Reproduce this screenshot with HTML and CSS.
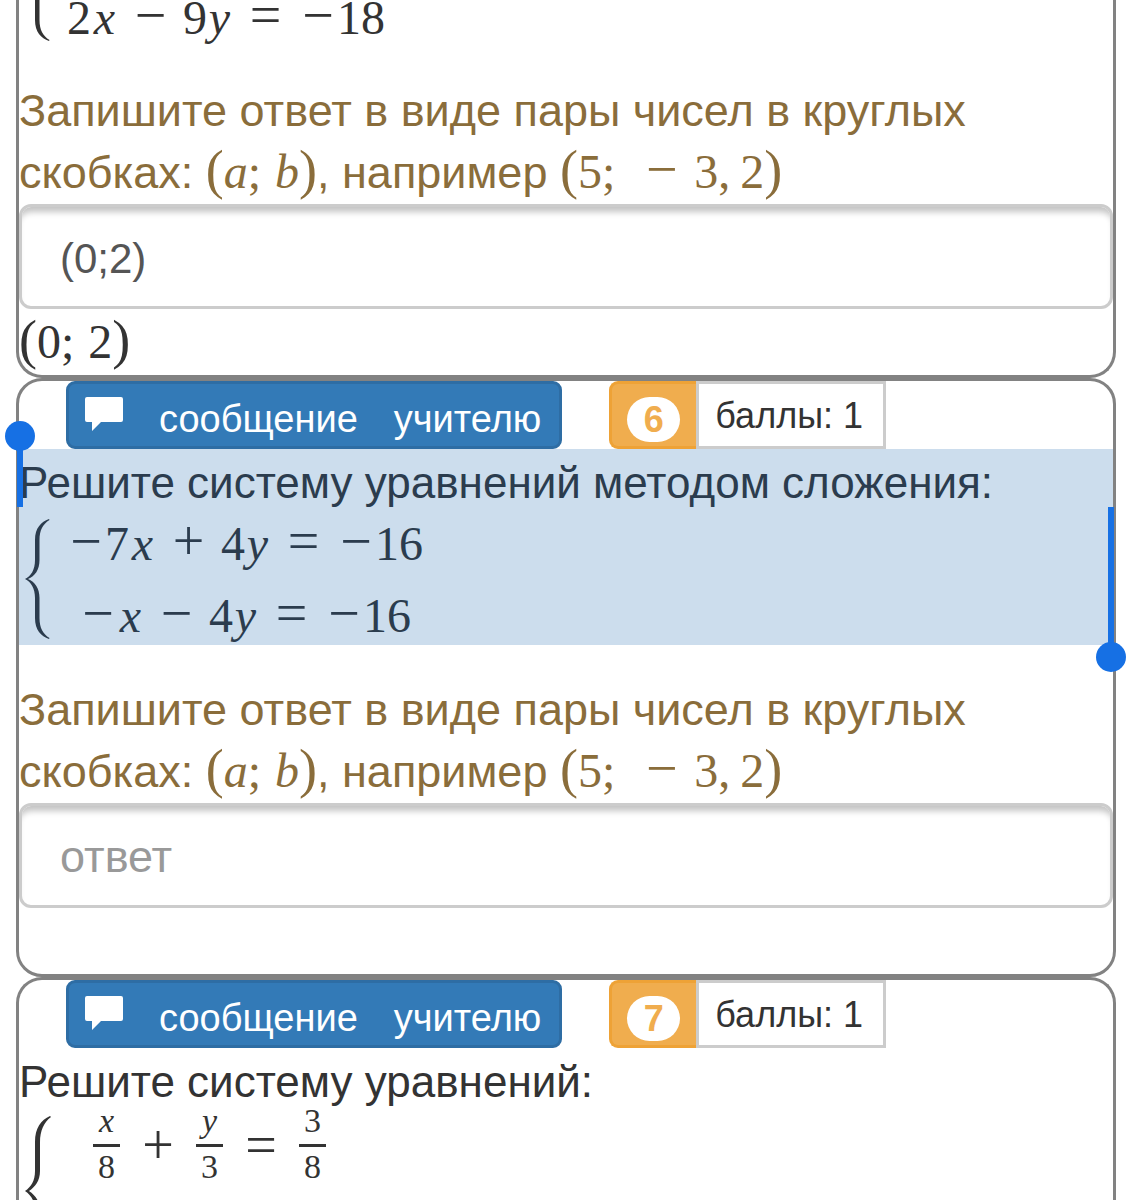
FILE: index.html
```html
<!DOCTYPE html>
<html lang="ru">
<head>
<meta charset="utf-8">
<meta name="viewport" content="width=device-width, initial-scale=1">
<title>Системы уравнений</title>
<link rel="stylesheet" href="styles.css">
</head>
<body>
<main class="page">
  <section class="card card-first">
    <div class="system system-end">
      <svg class="brace-end" viewBox="0 80 27 42" aria-hidden="true"><path d="M11 80V100C11 112 17 118 25 121L25.500 120C19 116 15.500 110 15.500 100V80Z"/></svg>
      <div class="rows">
        <div class="row math"><span>2</span><i class="x">x</i><span class="op">−</span><span>9</span><i class="y">y</i><span class="rel">=</span><span class="neg">−</span><span>18</span></div>
      </div>
    </div>
    <label class="hint" for="answer5">Запишите ответ в виде пары чисел в круглых скобках: <span class="math"><span class="paren">(</span><i>a</i><span class="semi">;</span><i>b</i><span class="paren">)</span></span>, например <span class="math"><span class="paren">(</span>5<span class="semi">;</span><span class="op">−</span>3<span class="comma">,</span>2<span class="paren">)</span></span></label>
    <input class="answer" id="answer5" type="text" value="(0;2)" placeholder="ответ">
    <div class="preview math"><span class="paren">(</span><span>0</span><span class="semi">;</span><span>2</span><span class="paren">)</span></div>
  </section>

  <section class="card">
    <div class="toolbar">
      <button class="message" type="button"><svg class="bubble" viewBox="0 0 38 34" aria-hidden="true"><path d="M2 0H36Q38 0 38 2V23Q38 25 36 25H16L7 34V25H2Q0 25 0 23V2Q0 0 2 0Z"/></svg><span>сообщение</span><span>учителю</span></button>
      <div class="score"><span class="number"><b class="badge">6</b></span><span class="points">баллы: 1</span></div>
    </div>
    <div class="selection">
      <p class="task">Решите систему уравнений методом сложения:</p>
      <div class="system">
        <svg class="brace" viewBox="0 0 27 122" aria-hidden="true"><path d="M25 1C17 4 11 10 11 22V42C11 52 7 58 1 61C7 64 11 70 11 80V100C11 112 17 118 25 121L25.500 120C19 116 15.500 110 15.500 100V80C15.500 70 11 64 4 61C11 58 15.500 52 15.500 42V22C15.500 12 19 6 25.500 2Z"/></svg>
        <div class="rows">
          <div class="row math"><span class="neg">−</span><span>7</span><i class="x">x</i><span class="op">+</span><span>4</span><i class="y">y</i><span class="rel">=</span><span class="neg">−</span><span>16</span></div>
          <div class="row math"><span class="neg">−</span><i class="x">x</i><span class="op">−</span><span>4</span><i class="y">y</i><span class="rel">=</span><span class="neg">−</span><span>16</span></div>
        </div>
      </div>
      <span class="handle handle-start"></span>
      <span class="handle handle-end"></span>
    </div>
    <label class="hint" for="answer6">Запишите ответ в виде пары чисел в круглых скобках: <span class="math"><span class="paren">(</span><i>a</i><span class="semi">;</span><i>b</i><span class="paren">)</span></span>, например <span class="math"><span class="paren">(</span>5<span class="semi">;</span><span class="op">−</span>3<span class="comma">,</span>2<span class="paren">)</span></span></label>
    <input class="answer" id="answer6" type="text" placeholder="ответ">
    <div class="preview math"></div>
  </section>

  <section class="card card-last">
    <div class="toolbar">
      <button class="message" type="button"><svg class="bubble" viewBox="0 0 38 34" aria-hidden="true"><path d="M2 0H36Q38 0 38 2V23Q38 25 36 25H16L7 34V25H2Q0 25 0 23V2Q0 0 2 0Z"/></svg><span>сообщение</span><span>учителю</span></button>
      <div class="score"><span class="number"><b class="badge">7</b></span><span class="points">баллы: 1</span></div>
    </div>
    <p class="task">Решите систему уравнений:</p>
    <div class="system">
      <svg class="brace-tall" viewBox="0 0 27 152" aria-hidden="true"><path d="M26 1C17 5 11 13 11 27V56C11 66 7 72 1 76C7 80 11 86 11 96V125C11 139 17 147 26 151L27 150C20 145 16 136 16 125V96C16 86 11 80 5 76C11 72 16 66 16 56V27C16 16 20 7 27 2Z"/></svg>
      <div class="fractions math"><span class="fraction"><i>x</i><span>8</span></span><span class="op">+</span><span class="fraction"><i>y</i><span>3</span></span><span class="rel">=</span><span class="fraction"><span>3</span><span>8</span></span></div>
    </div>
  </section>
</main>
</body>
</html>
```
FILE: styles.css
```css
* { box-sizing: border-box; }

body {
  margin: 0;
  background: #fff;
  color: #333;
  font-family: "Liberation Sans", Arial, sans-serif;
  font-size: 44px;
  line-height: 62px;
}

.page {
  display: flex;
  flex-direction: column;
  height: 100vh;
  overflow: hidden;
  padding: 0 18px 0 16px;
}

.card {
  flex: none;
  border: 3px solid #828282;
  border-radius: 26px;
}

.card-first {
  border-top: 0;
  border-top-left-radius: 0;
  border-top-right-radius: 0;
}

.card-last {
  flex: 1 0 0;
  min-height: 0;
  border-bottom: 0;
  border-bottom-left-radius: 0;
  border-bottom-right-radius: 0;
}

.toolbar {
  display: flex;
  gap: 47px;
  height: 68px;
  padding-left: 47px;
}

.message {
  display: flex;
  align-items: center;
  gap: 36px;
  height: 68px;
  padding: 8px 18px 0 16px;
  border: 3px solid #2e6da4;
  border-radius: 9px;
  background: #337ab7;
  color: #fff;
  font: 38px/52px "Liberation Sans", Arial, sans-serif;
  white-space: nowrap;
}

.bubble {
  width: 38px;
  height: 34px;
  margin-bottom: 10px;
  fill: #fff;
}

.score {
  display: flex;
  font-size: 36px;
  line-height: 64px;
}

.number {
  display: flex;
  align-items: center;
  width: 87px;
  padding: 8px 0 0 15px;
  border: 3px solid #eea236;
  border-right: 0;
  border-radius: 9px 0 0 9px;
  background: #f0ad4e;
}

.badge {
  width: 53px;
  height: 45px;
  border-radius: 23px;
  background: #fff;
  color: #f0ad4e;
  line-height: 46px;
  text-align: center;
}

.points {
  padding: 0 20px 0 16px;
  border: 3px solid #ccc;
  white-space: nowrap;
}

.task {
  margin: 0;
  padding-top: 4px;
  line-height: 60px;
}

.selection {
  position: relative;
  background: #ccdded;
  color: #2b3c4e;
}

.handle {
  position: absolute;
  width: 6px;
  background: #1670e4;
}

.handle::after {
  content: "";
  position: absolute;
  left: -12px;
  width: 30px;
  height: 30px;
  border-radius: 50%;
  background: #1670e4;
}

.handle-start { top: 0; left: -2px; height: 58px; }
.handle-start::after { top: -28px; }
.handle-end { right: -1px; bottom: 0; height: 138px; }
.handle-end::after { bottom: -27px; }

.math {
  font-family: "Liberation Serif", "Times New Roman", serif;
  font-size: 48px;
}

.system {
  display: flex;
  gap: 16px;
  padding-left: 5px;
}

.brace,
.brace-end,
.brace-tall {
  flex: none;
  width: 27px;
  fill: currentColor;
}

.brace { height: 122px; margin-top: 5px; margin-bottom: 5px; }
.brace-end { height: 42px; }
.brace-tall { height: 152px; margin-top: 3px; }

.rows {
  display: flex;
  flex-direction: column;
  align-items: center;
  gap: 12px;
}

.row {
  display: flex;
  align-items: baseline;
  height: 60px;
  line-height: 56px;
}

.system-end .row {
  height: 46px;
  line-height: 30px;
}

.row i,
.op,
.rel,
.neg {
  display: inline-block;
  text-align: center;
}

.op,
.rel,
.neg { font-size: 56px; }

.x { width: 27px; }
.y { width: 25px; }
.op { width: 65px; }
.rel { width: 67px; }
.neg { width: 38px; }

.fractions {
  display: flex;
  align-items: center;
  height: 66px;
  margin-left: 10px;
  padding-left: 16px;
}

.fractions .op,
.fractions .rel { width: 76px; }

.fraction {
  display: flex;
  flex-direction: column;
  width: 27px;
  font-size: 34px;
  line-height: 40px;
  text-align: center;
}

.fraction > :first-child {
  padding-bottom: 6px;
  border-bottom: 3px solid currentColor;
  line-height: 34px;
}

.hint {
  display: block;
  padding-top: 34px;
  color: #8a6d3b;
  font-size: 45px;
}

.hint .math { line-height: 56px; }
.hint .op { line-height: 48px; }
.paren { font-size: 54px; line-height: 48px; }
.semi { margin-right: 14px; }
.comma { margin-right: 10px; }

.answer {
  display: block;
  width: 100%;
  height: 105px;
  padding: 4px 38px 0;
  border: 3px solid #ccc;
  border-radius: 12px;
  background: #fff;
  box-shadow: inset 0 9px 6px -4px #c4c4c4;
  color: #555;
  font: inherit;
  font-size: 42px;
}

.answer::placeholder {
  color: #999;
  font-size: 45px;
  opacity: 1;
}

.preview { height: 66px; line-height: 66px; }
```
